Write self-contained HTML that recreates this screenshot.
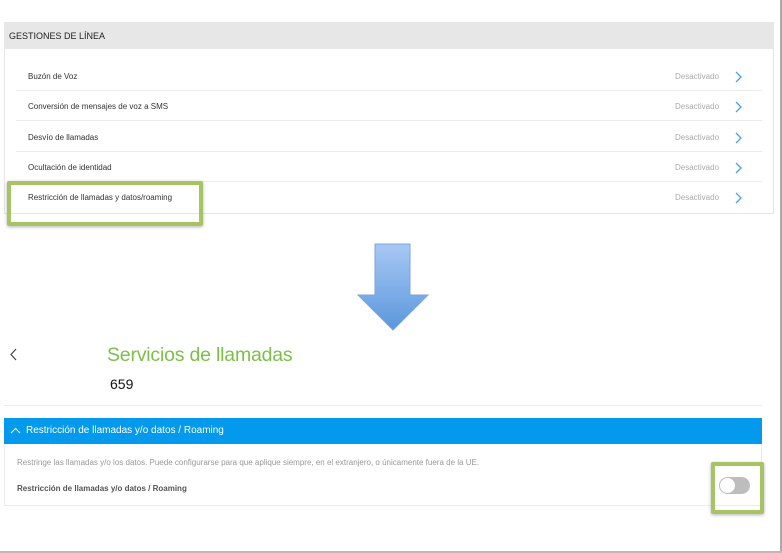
<!DOCTYPE html>
<html><head><meta charset="utf-8"><style>
*{margin:0;padding:0;box-sizing:border-box}
body{width:782px;height:553px;background:#fff;position:relative;overflow:hidden;font-family:"Liberation Sans",sans-serif;color:#333}
.a{position:absolute}
.row{position:absolute;left:16px;width:746px;height:30px;border-bottom:1px solid #ececec}
.row span{position:absolute;left:12px;top:11px;font-size:8px;color:#333}
.row i{position:absolute;left:659px;top:11px;font-size:8px;color:#aaa;font-style:normal}
.row svg{position:absolute;left:719px;top:10px}
</style></head><body>
<div class="a" style="left:780px;top:0;width:2px;height:553px;background:#aaa"></div>
<div class="a" style="left:0;top:551px;width:782px;height:2px;background:#bbb"></div>
<div class="a" style="left:4px;top:22px;width:770px;height:192px;border:1px solid #e6e6e6"></div>
<div class="a" style="left:4px;top:22px;width:770px;height:27px;background:#e7e7e7"></div>
<div class="a" style="left:9px;top:31px;font-size:9px;color:#222">GESTIONES DE LÍNEA</div>
<div class="row" style="top:61px"><span>Buzón de Voz</span><i>Desactivado</i><svg width="8" height="12"><path d="M1 1L6 6L1 11" stroke="#4aa3ea" stroke-width="1.3" fill="none"/></svg></div>
<div class="row" style="top:91px"><span>Conversión de mensajes de voz a SMS</span><i>Desactivado</i><svg width="8" height="12"><path d="M1 1L6 6L1 11" stroke="#4aa3ea" stroke-width="1.3" fill="none"/></svg></div>
<div class="row" style="top:122px"><span>Desvío de llamadas</span><i>Desactivado</i><svg width="8" height="12"><path d="M1 1L6 6L1 11" stroke="#4aa3ea" stroke-width="1.3" fill="none"/></svg></div>
<div class="row" style="top:152px"><span>Ocultación de identidad</span><i>Desactivado</i><svg width="8" height="12"><path d="M1 1L6 6L1 11" stroke="#4aa3ea" stroke-width="1.3" fill="none"/></svg></div>
<div class="row" style="top:182px;border:none"><span>Restricción de llamadas y datos/roaming</span><i>Desactivado</i><svg width="8" height="12"><path d="M1 1L6 6L1 11" stroke="#4aa3ea" stroke-width="1.3" fill="none"/></svg></div>
<div class="a" style="left:7px;top:181px;width:196px;height:45px;border:4px solid #a6c462;border-radius:2px;box-shadow:0 1px 3px rgba(0,0,0,.3)"></div>
<svg class="a" style="left:356px;top:242px" width="74" height="92"><defs><linearGradient id="g" x1="0" y1="0" x2="0" y2="1"><stop offset="0" stop-color="#a8c8f4"/><stop offset="1" stop-color="#5a97dc"/></linearGradient></defs><path d="M19 2H54V53H72L37 88L2 53H19Z" fill="url(#g)" stroke="#7aa6dc" stroke-width="1"/></svg>
<svg class="a" style="left:9px;top:348px" width="10" height="14"><path d="M7 1L2 6.5L7 12" stroke="#444" stroke-width="1.2" fill="none"/></svg>
<div class="a" style="left:107px;top:344px;font-size:19.5px;color:#7cc04a;letter-spacing:-0.2px">Servicios de llamadas</div>
<div class="a" style="left:110px;top:376px;font-size:14px;color:#111">659</div>
<div class="a" style="left:4px;top:405px;width:758px;height:1px;background:#eaeaea"></div>
<div class="a" style="left:4px;top:418px;width:758px;height:88px;border:1px solid #ececec"></div>
<div class="a" style="left:4px;top:418px;width:758px;height:26px;background:#0399ec"></div>
<svg class="a" style="left:10px;top:427px" width="12" height="8"><path d="M1 6L5.5 1.5L10 6" stroke="#fff" stroke-width="1.1" fill="none"/></svg>
<div class="a" style="left:26px;top:425px;font-size:10px;color:#fff">Restricción de llamadas y/o datos / Roaming</div>
<div class="a" style="left:17px;top:458px;font-size:8px;color:#999">Restringe las llamadas y/o los datos. Puede configurarse para que aplique siempre, en el extranjero, o únicamente fuera de la UE.</div>
<div class="a" style="left:17px;top:484px;font-size:8px;color:#555;font-weight:bold">Restricción de llamadas y/o datos / Roaming</div>
<div class="a" style="left:719px;top:477px;width:31px;height:17px;border-radius:9px;background:#bdbdbd"></div>
<div class="a" style="left:720px;top:478px;width:15px;height:15px;border-radius:50%;background:#fff"></div>
<div class="a" style="left:711px;top:462px;width:53px;height:52px;border:4px solid #a6c462;border-radius:2px;box-shadow:0 1px 3px rgba(0,0,0,.3)"></div>
</body></html>
